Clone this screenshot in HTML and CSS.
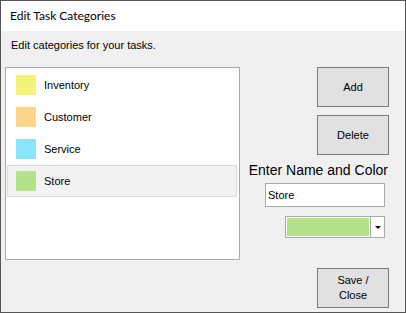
FILE: index.html
```html
<!DOCTYPE html>
<html lang="en">

<head>
    <meta charset="UTF-8">
    <meta name="viewport" content="width=device-width, initial-scale=1.0">
    <title>Edit Task Categories</title>
    <link rel="stylesheet" href="styles.css">
</head>

<body>
    <div class="window">
        <div class="titlebar">Edit Task Categories</div>
        <div class="content">
            <div class="left">
                <div class="desc">Edit categories for your tasks.</div>
                <div class="listbox">
                    <div class="item"><span class="swatch yellow"></span>Inventory</div>
                    <div class="item"><span class="swatch orange"></span>Customer</div>
                    <div class="item"><span class="swatch blue"></span>Service</div>
                    <div class="item selected"><span class="swatch green"></span>Store</div>
                </div>
            </div>
            <div class="right">
                <div class="btn add">Add</div>
                <div class="btn delete">Delete</div>
                <div class="label">Enter Name and Color</div>
                <input class="name" type="text" value="Store">
                <div class="combo">
                    <div class="combo-color"></div>
                    <div class="combo-arrow"><span class="tri"></span></div>
                </div>
                <div class="btn save">Save /<br>Close</div>
            </div>
        </div>
    </div>
</body>

</html>
```

FILE: styles.css
```css
body {
    margin: 0;
    font-family: "Liberation Sans", Arial, sans-serif;
    font-size: 11px;
    color: #000;
}
.window {
    width: 406px;
    height: 313px;
    box-sizing: border-box;
    border: 1px solid #555555;
    background: #f0f0f0;
    display: flex;
    flex-direction: column;
}
.titlebar {
    height: 30px;
    background: #fff;
    font-family: Lato, "Liberation Sans", sans-serif;
    font-size: 12px;
    line-height: 30px;
    padding-left: 9px;
    color: #000;
}
.content {
    flex: 1;
    display: flex;
}
.left {
    padding-left: 4px;
}
.desc {
    padding: 8px 0 0 6px;
    line-height: 13px;
}
.listbox {
    margin-top: 15px;
    width: 235px;
    height: 193px;
    box-sizing: border-box;
    border: 1px solid #ababab;
    background: #fff;
    padding: 1px 2px 1px 1px;
}
.item {
    height: 32px;
    box-sizing: border-box;
    border: 1px solid transparent;
    display: flex;
    align-items: center;
    padding-left: 8px;
    gap: 8px;
    font-size: 11px;
}
.item.selected {
    background: #f3f3f3;
    border-color: #d9d9d9;
}
.swatch {
    width: 20px;
    height: 20px;
}
.yellow { background: #f3f378; }
.orange { background: #fdd68b; }
.blue { background: #8be4fd; }
.green { background: #b4e28a; }
.right {
    flex: 1;
    display: flex;
    flex-direction: column;
    align-items: flex-end;
}
.btn {
    width: 72px;
    height: 40px;
    box-sizing: border-box;
    border: 1px solid #7a7a7a;
    background: #e1e1e1;
    display: flex;
    align-items: center;
    justify-content: center;
    text-align: center;
    line-height: 15px;
    margin-right: 16px;
}
.add {
    margin-top: 36px;
}
.delete {
    margin-top: 8px;
}
.label {
    margin-top: 7px;
    margin-right: 17px;
    font-size: 14px;
    line-height: 16px;
}
.name {
    margin: 5px 20px 0 0;
    width: 120px;
    height: 24px;
    box-sizing: border-box;
    border: 1px solid #a9a9a9;
    background: #fff;
    padding: 0 2px;
    font-family: "Liberation Sans", Arial, sans-serif;
    font-size: 11px;
    color: #000;
    outline: none;
}
.combo {
    margin: 9px 20px 0 0;
    width: 100px;
    height: 22px;
    box-sizing: border-box;
    border: 1px solid #a9a9a9;
    background: #fff;
    display: flex;
    padding: 1px 0 1px 1px;
}
.combo-color {
    flex: 1;
    background: #b4e28a;
    margin-right: 1px;
}
.combo-arrow {
    width: 13px;
    border-left: 1px solid #a9a9a9;
    margin: -1px 0;
    display: flex;
    align-items: center;
    justify-content: center;
}
.tri {
    width: 0;
    height: 0;
    border-left: 3px solid transparent;
    border-right: 3px solid transparent;
    border-top: 3px solid #000;
}
.save {
    margin-top: 30px;
}
```
